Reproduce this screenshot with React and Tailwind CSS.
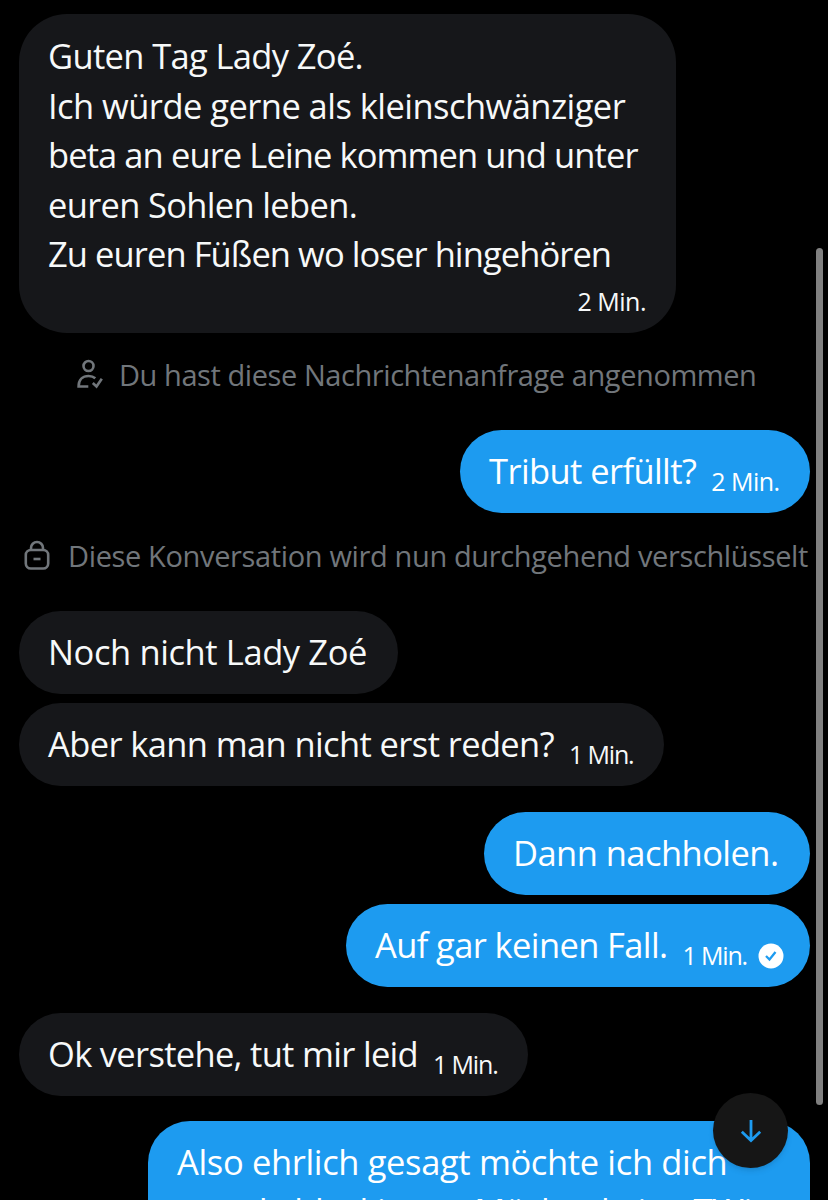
import React from 'react';

const Line = ({ children, className = '' }) => (
    <span className={`block w-max whitespace-nowrap ${className}`}>{children}</span>
);

const Time = ({ children, className = '' }) => (
    <span className={`whitespace-nowrap text-[25px] leading-[30px] ${className}`}>{children}</span>
);

const Bubble = ({ mine, time, seen, className = '', textClass = '', timeClass = 'tracking-[-1.15px]', children }) => (
    <div
        className={`flex h-[83px] items-center rounded-[42px] px-[29px] pb-[2px] ${
            mine ? 'self-end bg-[#1d9bf0] text-white' : 'self-start bg-[#16171a] text-[#f7f9f9]'
        } ${className}`}
    >
        <Line className={textClass}>{children}</Line>
        {time && <Time className={`ml-[15px] mt-[21px] ${timeClass}`}>{time}</Time>}
        {seen && (
            <svg viewBox="0 0 26 26" className="ml-[11px] mt-[22px] h-[26px] w-[26px] shrink-0" fill="none">
                <circle cx="13" cy="13" r="12.5" fill="#fff" />
                <path d="M8 13l3.500 3.500 6-7.500" stroke="#1d9bf0" strokeWidth="2.3" />
            </svg>
        )}
    </div>
);

const UserCheckIcon = () => (
    <svg viewBox="0 0 28 32" className="h-[32px] w-[28px] shrink-0" fill="none" stroke="currentColor" strokeWidth="2.6">
        <circle cx="12.5" cy="7" r="5" />
        <path d="M12.300 27.500H2.600c0-6.800 4-10.500 10-10.500 3 0 5 .8 6.700 2.300" />
        <path d="M16.800 24l3.700 3.500 5.300-7.800" />
    </svg>
);

const LockIcon = () => (
    <svg viewBox="0 0 28 32" className="h-[32px] w-[28px] shrink-0" fill="none" stroke="currentColor" strokeWidth="2.6">
        <rect x="2.800" y="10" width="22.400" height="18.500" rx="5" />
        <path d="M8 10V8a6 6 0 0 1 12 0v2" />
        <path d="M10.500 19h7" />
    </svg>
);

const App = () => (
    <div className="relative h-[1200px] w-[828px] overflow-hidden bg-black font-['Open_Sans','Noto_Sans',sans-serif] text-[34.5px] leading-[49.5px]">
        <div className="flex flex-col pl-[19px] pr-[18px] pt-[14px]">
            <div className="flex h-[319px] w-[657px] flex-col self-start rounded-[48px] bg-[#16171a] px-[29px] pt-[17px] text-[#f7f9f9]">
                <Line className="tracking-[-0.65px]">Guten Tag Lady Zoé.</Line>
                <Line className="tracking-[-0.55px]">Ich würde gerne als kleinschwänziger</Line>
                <Line className="tracking-[-0.91px]">beta an eure Leine kommen und unter</Line>
                <Line className="tracking-[-0.68px]">euren Sohlen leben.</Line>
                <Line className="tracking-[-0.92px]">Zu euren Füßen wo loser hingehören</Line>
                <Time className="mr-px mt-[7px] self-end tracking-[-0.5px]">2 Min.</Time>
            </div>

            <div className="mt-[26px] flex h-[32px] items-center pl-[57px] text-[29px] text-[#71767b]">
                <UserCheckIcon />
                <Line className="ml-[15px] tracking-[-0.43px]">Du hast diese Nachrichtenanfrage angenommen</Line>
            </div>

            <Bubble mine time="2 Min." className="mt-[39px] w-[350px]" textClass="tracking-[-0.6px]" timeClass="tracking-[-0.5px]">
                Tribut erfüllt?
            </Bubble>

            <div className="mt-[27px] flex h-[32px] items-center pl-[4px] text-[29px] text-[#71767b]">
                <LockIcon />
                <Line className="ml-[17px] tracking-[-0.36px]">Diese Konversation wird nun durchgehend verschlüsselt</Line>
            </div>

            <Bubble className="mt-[39px] w-[379px]" textClass="tracking-[-0.4px]">Noch nicht Lady Zoé</Bubble>
            <Bubble time="1 Min." className="mt-[9px] w-[645px]" textClass="tracking-[-0.62px]">
                Aber kann man nicht erst reden?
            </Bubble>
            <Bubble mine className="mt-[26px] w-[326px]" textClass="tracking-[-0.55px]">Dann nachholen.</Bubble>
            <Bubble mine seen time="1 Min." className="mt-[9px] w-[464px]" textClass="tracking-[-0.62px]">
                Auf gar keinen Fall.
            </Bubble>
            <Bubble time="1 Min." className="mt-[26px] w-[509px]" textClass="tracking-[-0.7px]">
                Ok verstehe, tut mir leid
            </Bubble>

            <div className="mt-[25px] h-[200px] w-[662px] self-end rounded-t-[42px] bg-[#1d9bf0] px-[29px] pt-[16px] text-white">
                <Line className="tracking-[-0.36px]">Also ehrlich gesagt möchte ich dich</Line>
                <Line className="-mt-px tracking-[-0.5px]">gerade blockieren. Möchte keine TWi</Line>
            </div>
        </div>

        <div className="absolute left-[816px] top-[248px] h-[857px] w-[7px] rounded-full bg-[#808080]" />
        <button className="absolute left-[713px] top-[1093px] flex h-[75px] w-[75px] items-center justify-center rounded-full bg-[#161616] shadow-md">
            <svg viewBox="0 0 24 26" className="h-[26px] w-[24px]" fill="none" stroke="#1d9bf0" strokeWidth="2.8">
                <path d="M12 2v21M2.800 13.800L12 22.500l9.200-8.700" />
            </svg>
        </button>
    </div>
);

export default App;
